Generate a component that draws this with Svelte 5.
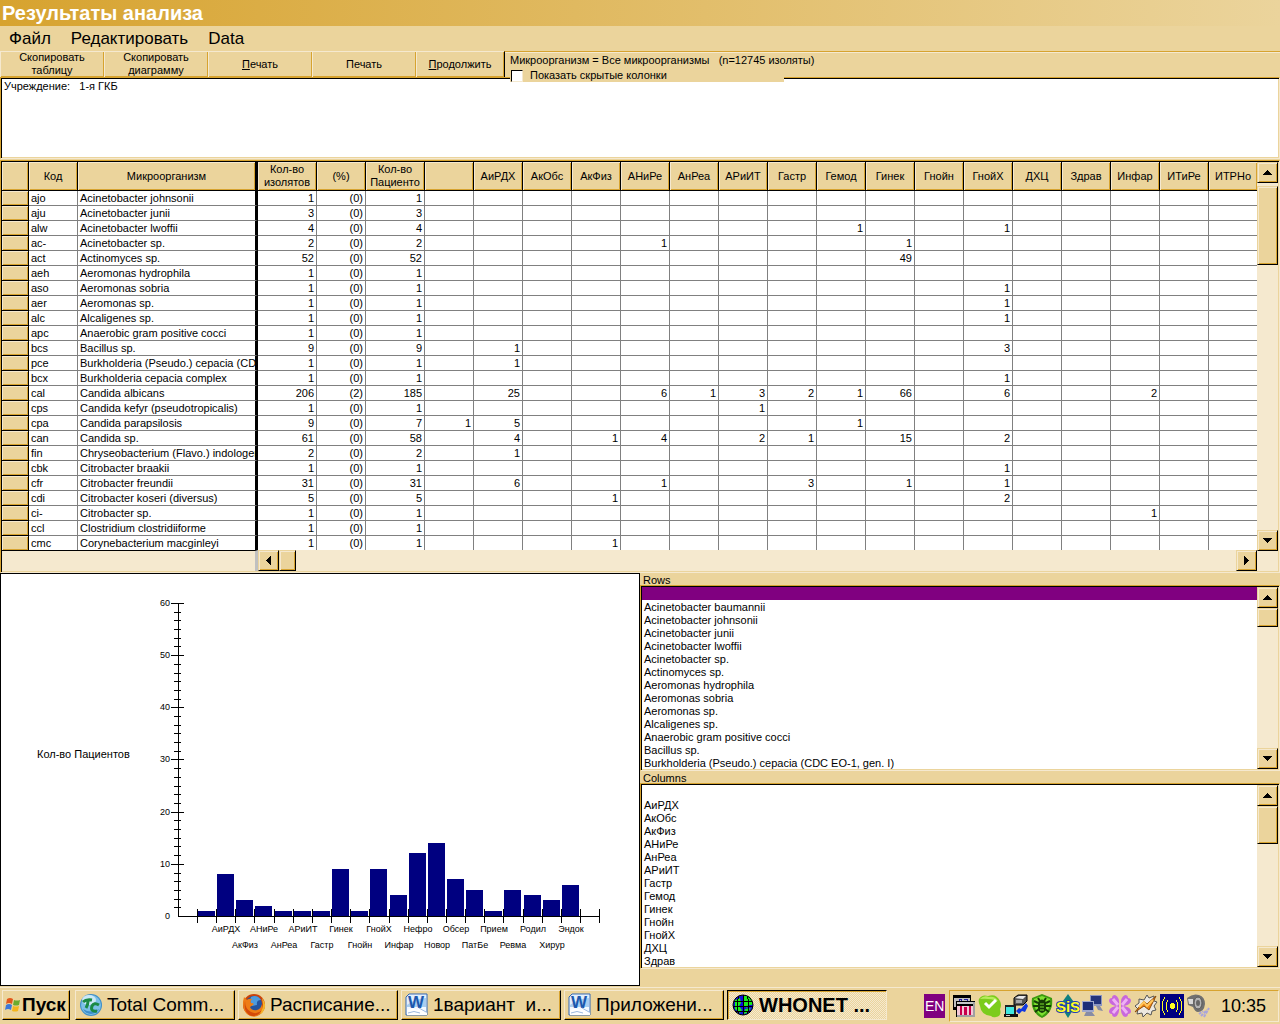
<script>
  const actions = [
    { lines: ['Скопировать', 'таблицу'] },
    { lines: ['Скопировать', 'диаграмму'] },
    { key: 'П', rest: 'ечать' },
    { lines: ['Печать'] },
    { key: 'П', rest: 'родолжить' },
  ];

  const wards = [
    '', 'АиРДХ', 'АкОбс', 'АкФиз', 'АНиРе', 'АнРеа', 'АРиИТ', 'Гастр', 'Гемод', 'Гинек',
    'Гнойн', 'ГнойХ', 'ДХЦ', 'Здрав', 'Инфар', 'ИТиРе', 'ИТРНо',
  ];

  // code, organism, isolates, percent, patients, { ward: count }
  const organisms = [
    ['ajo', 'Acinetobacter johnsonii', 1, 0, 1, {}],
    ['aju', 'Acinetobacter junii', 3, 0, 3, {}],
    ['alw', 'Acinetobacter lwoffii', 4, 0, 4, { Гемод: 1, ГнойХ: 1 }],
    ['ac-', 'Acinetobacter sp.', 2, 0, 2, { АНиРе: 1, Гинек: 1 }],
    ['act', 'Actinomyces sp.', 52, 0, 52, { Гинек: 49 }],
    ['aeh', 'Aeromonas hydrophila', 1, 0, 1, {}],
    ['aso', 'Aeromonas sobria', 1, 0, 1, { ГнойХ: 1 }],
    ['aer', 'Aeromonas sp.', 1, 0, 1, { ГнойХ: 1 }],
    ['alc', 'Alcaligenes sp.', 1, 0, 1, { ГнойХ: 1 }],
    ['apc', 'Anaerobic gram positive cocci', 1, 0, 1, {}],
    ['bcs', 'Bacillus sp.', 9, 0, 9, { АиРДХ: 1, ГнойХ: 3 }],
    ['pce', 'Burkholderia (Pseudo.) cepacia (CDC', 1, 0, 1, { АиРДХ: 1 }],
    ['bcx', 'Burkholderia cepacia complex', 1, 0, 1, { ГнойХ: 1 }],
    ['cal', 'Candida albicans', 206, 2, 185, { АиРДХ: 25, АНиРе: 6, АнРеа: 1, АРиИТ: 3, Гастр: 2, Гемод: 1, Гинек: 66, ГнойХ: 6, Инфар: 2 }],
    ['cps', 'Candida kefyr (pseudotropicalis)', 1, 0, 1, { АРиИТ: 1 }],
    ['cpa', 'Candida parapsilosis', 9, 0, 7, { '': 1, АиРДХ: 5, Гемод: 1 }],
    ['can', 'Candida sp.', 61, 0, 58, { АиРДХ: 4, АкФиз: 1, АНиРе: 4, АРиИТ: 2, Гастр: 1, Гинек: 15, ГнойХ: 2 }],
    ['fin', 'Chryseobacterium (Flavo.) indologene', 2, 0, 2, { АиРДХ: 1 }],
    ['cbk', 'Citrobacter braakii', 1, 0, 1, { ГнойХ: 1 }],
    ['cfr', 'Citrobacter freundii', 31, 0, 31, { АиРДХ: 6, АНиРе: 1, Гастр: 3, Гинек: 1, ГнойХ: 1 }],
    ['cdi', 'Citrobacter koseri (diversus)', 5, 0, 5, { АкФиз: 1, ГнойХ: 2 }],
    ['ci-', 'Citrobacter sp.', 1, 0, 1, { Инфар: 1 }],
    ['ccl', 'Clostridium clostridiiforme', 1, 0, 1, {}],
    ['cmc', 'Corynebacterium macginleyi', 1, 0, 1, { АкФиз: 1 }],
  ];

  const rowItems = [
    '', 'Acinetobacter baumannii', 'Acinetobacter johnsonii', 'Acinetobacter junii',
    'Acinetobacter lwoffii', 'Acinetobacter sp.', 'Actinomyces sp.', 'Aeromonas hydrophila',
    'Aeromonas sobria', 'Aeromonas sp.', 'Alcaligenes sp.', 'Anaerobic gram positive cocci',
    'Bacillus sp.', 'Burkholderia (Pseudo.) cepacia (CDC EO-1, gen. I)',
  ];
  const columnItems = wards.slice(0, 14);

  const bars = [
    ['', 1], ['АиРДХ', 8], ['АкФиз', 3], ['АНиРе', 2], ['АнРеа', 1], ['АРиИТ', 1], ['Гастр', 1],
    ['Гинек', 9], ['Гнойн', 1], ['ГнойХ', 9], ['Инфар', 4], ['Нефро', 12], ['Новор', 14],
    ['Обсер', 7], ['ПатБе', 5], ['Прием', 1], ['Ревма', 5], ['Родил', 4], ['Хирур', 3], ['Эндок', 6],
  ];

  // chart geometry
  const baseY = 342;
  const axisX = 177;
  const yAt = (v) => Math.round(baseY - v * 5.217);
  const xAt = (i) => Math.round(axisX + 19 + i * 19.15);
  const majors = [0, 10, 20, 30, 40, 50, 60];
  const minors = Array.from({ length: 36 }, (_, i) => (i * 10) / 6).filter((_, i) => i % 6 !== 0);
  const xTicks = Array.from({ length: 22 }, (_, i) => i);

  const tasks = [
    { icon: 'commander', title: 'Total Comm...' },
    { icon: 'firefox', title: 'Расписание...' },
    { icon: 'word', title: '1вариант  и...' },
    { icon: 'word', title: 'Приложени...' },
    { icon: 'globe', title: 'WHONET ...', active: true },
  ];

  let rowSelection = $state(rowItems[0]);
  let showHidden = $state(false);
</script>

{#snippet arrow(dir)}
  <svg class="arrow" width="9" height="9" viewBox="0 0 9 9" aria-hidden="true">
    {#if dir === 'up'}
      <path d="M4 2h1v1h1v1h1v1h1v1h1v1H0V6h1V5h1V4h1V3h1z" />
    {:else if dir === 'down'}
      <path d="M0 2h9v1H8v1H7v1H6v1H5v1H4V6H3V5H2V4H1V3H0z" />
    {:else if dir === 'left'}
      <path d="M2 4h1V3h1V2h1V1h1V0h1v9H6V8H5V7H4V6H3V5H2z" />
    {:else}
      <path d="M2 0h1v1h1v1h1v1h1v1h1v1H6v1H5v1H4v1H3v1H2z" />
    {/if}
  </svg>
{/snippet}

{#snippet vscroll(size)}
  <div class="vscroll">
    <button type="button" class="scroll-btn" aria-label="Scroll up">{@render arrow('up')}</button>
    <div class="thumb {size}"></div>
    <button type="button" class="scroll-btn end" aria-label="Scroll down">{@render arrow('down')}</button>
  </div>
{/snippet}

{#snippet taskIcon(name)}
  <svg class="task-icon" width="24" height="24" viewBox="0 0 24 24" aria-hidden="true">
    {#if name === 'commander'}
      <circle cx="12" cy="12" r="11" fill="#3f8fc8" />
      <circle cx="12" cy="12" r="10" fill="#7cc0e6" />
      <ellipse cx="10" cy="7" rx="7" ry="5" fill="#cbe8f7" />
      <path d="M4 16a9 9 0 0 0 16 0q-8 5-16 0z" fill="#3d8ecb" />
      <path d="M4 9q3-3 9-2M9 8q0 4-2 7" stroke="#1b8a45" stroke-width="3" fill="none" />
      <path d="M20 12q-5-3-7 1q-2 6 5 5" stroke="#1b8a45" stroke-width="3" fill="none" />
    {:else if name === 'firefox'}
      <circle cx="12" cy="12" r="11" fill="#c9430d" />
      <circle cx="12" cy="11" r="8" fill="#26549d" />
      <path d="M9 4q6-3 10 3q-5 0-4 5l-5 1q-3-4-1-9z" fill="#4f9bdc" />
      <path d="M2 4l3 3q2-2 5-1q-2 2-1 4q4 0 2 2l-3 2q2 4 7 3q4-1 5-6q2 7-3 11q-6 4-12-1Q-1 15 2 4z" fill="#ee7c14" />
      <path d="M3 8q0 8 6 11q6 3 11-2q-3 6-10 6Q1 21 3 8z" fill="#d34a0a" />
      <path d="M20 5q5 6 2 12q-1 3-4 4q3-6 3-9z" fill="#f6b428" />
    {:else if name === 'word'}
      <path d="M4 1h18v21H1V4z" fill="#f4f9ff" stroke="#2f66b4" />
      <path d="M4 2h17v12H2V4z" fill="#a9cdf0" />
      <path d="M4 2h17v3Q9 6 2 12V4z" fill="#e2effc" />
      <text class="word-mark" x="11" y="15">W</text>
      <path d="M2 17q6-3 10 0l4-2 6 5v2H2z" fill="#fff" />
      <path d="M3 20q6-3 12 0M14 15l7 4" stroke="#9bb8de" fill="none" />
    {:else}
      <circle cx="12" cy="12" r="10" fill="#1010e0" />
      <path d="M13 3h5l3 5v4h-4l-1 3-3-2-1-4zM4 7l5-2 1 5-2 3 3 4-2 3-5-4zM14 16l6-1-4 5-3 1z" fill="#18f018" />
      <g fill="none" stroke="#000" shape-rendering="crispEdges">
        <path d="M3 8h18M2 13h20M4 18h16M12 2v20" />
        <path d="M8 3Q4 12 8 21M16 3q4 9 0 18" />
      </g>
      <circle cx="12" cy="12" r="10" fill="none" stroke="#000" />
    {/if}
  </svg>
{/snippet}

<div class="window">
  <header class="title">Результаты анализа</header>

  <nav class="menu">
    <button type="button">Файл</button>
    <button type="button">Редактировать</button>
    <button type="button">Data</button>
  </nav>

  <div class="toolbar">
    {#each actions as a}
      <button type="button" class="action">
        {#if a.key}
          <span><u>{a.key}</u>{a.rest}</span>
        {:else}
          {#each a.lines as line}<span>{line}</span>{/each}
        {/if}
      </button>
    {/each}
    <div class="summary">
      <div class="caption">Микроорганизм = Все микроорганизмы &nbsp; (n=12745 изоляты)</div>
      <label class="hidden-cols">
        <input type="checkbox" bind:checked={showHidden} />
        Показать скрытые колонки
      </label>
    </div>
  </div>

  <textarea class="sunken filters" readonly aria-label="Фильтр">Учреждение:   1-я ГКБ</textarea>

  <section class="sunken grid">
    <div class="grid-main">
      <div class="grid-view">
        <table>
          <colgroup>
            <col class="w-head" /><col class="w-std" /><col class="w-name" /><col class="w-wide" />
            <col class="w-std" /><col class="w-wide" />
            {#each wards as _}<col class="w-std" />{/each}
          </colgroup>
          <thead>
            <tr>
              <th></th>
              <th>Код</th>
              <th class="frozen">Микроорганизм</th>
              <th>Кол-во<br />изолятов</th>
              <th>(%)</th>
              <th>Кол-во<br />Пациенто</th>
              {#each wards as w}<th>{w}</th>{/each}
            </tr>
          </thead>
          <tbody>
            {#each organisms as [code, name, isolates, pct, patients, counts]}
              <tr>
                <th></th>
                <td class="text">{code}</td>
                <td class="text frozen">{name}</td>
                <td>{isolates}</td>
                <td>({pct})</td>
                <td>{patients}</td>
                {#each wards as w}<td>{counts[w] ?? ''}</td>{/each}
              </tr>
            {/each}
          </tbody>
        </table>
      </div>
      <div class="hscroll">
        <div class="frozen-foot"></div>
        <button type="button" class="scroll-btn" aria-label="Scroll left">{@render arrow('left')}</button>
        <div class="thumb wide"></div>
        <button type="button" class="scroll-btn end" aria-label="Scroll right">{@render arrow('right')}</button>
      </div>
    </div>
    <div class="grid-side">
      {@render vscroll('tall')}
      <div class="corner"></div>
    </div>
  </section>

  <div class="lower">
    <div class="chart">
      <svg viewBox="0 0 638 411" role="img" aria-label="Кол-во Пациентов">
        <text class="axis-title" x="36" y="184">Кол-во Пациентов</text>
        {#each bars as [label, value], i}
          <rect x={xAt(i) + 1} y={yAt(value)} width="17" height={baseY - yAt(value)} fill="#000080" />
          {#if label}
            <text class="bar-label" x={xAt(i) + 10} y={i % 2 ? 358 : 374}>{label}</text>
          {/if}
        {/each}
        <g fill="#000" shape-rendering="crispEdges">
          <rect x={axisX} y={yAt(60)} width="1" height={baseY - yAt(60)} />
          <rect x={axisX} y={baseY} width={xAt(21) - axisX + 1} height="1" />
          {#each majors.slice(1) as v}<rect x={axisX - 7} y={yAt(v)} width="13" height="1" />{/each}
          {#each minors as v}<rect x={axisX - 4} y={yAt(v)} width="7" height="1" />{/each}
          {#each xTicks as i}<rect x={xAt(i)} y={baseY - 7} width="1" height="14" />{/each}
        </g>
        {#each majors as v}<text class="y-label" x={axisX - 8} y={yAt(v) + 3}>{v}</text>{/each}
      </svg>
    </div>

    <div class="lists">
      <label for="rows">Rows</label>
      <div class="sunken list">
        <select id="rows" size="14" bind:value={rowSelection}>
          {#each rowItems as item}<option value={item}>{item}</option>{/each}
        </select>
        {@render vscroll('small')}
      </div>
      <label for="columns">Columns</label>
      <div class="sunken list">
        <select id="columns" size="14">
          {#each columnItems as item}<option value={item}>{item}</option>{/each}
        </select>
        {@render vscroll('medium')}
      </div>
    </div>
  </div>

  <footer class="taskbar">
    <button type="button" class="task start">
      <svg width="17" height="18" viewBox="0 0 17 18" aria-hidden="true">
        <path d="M3 3q3-2 6 0L8 8Q5 6 2 8z" fill="#e2571c" />
        <path d="M10 4q3 1 6 0l-1 5q-3 1-6 0z" fill="#6cab2e" />
        <path d="M2 9q3-2 6 0l-1 5Q4 12 1 14z" fill="#3c78d8" />
        <path d="M9 10q3 1 6 0l-1 5q-3 1-6 0z" fill="#f4b51c" />
      </svg>
      <span>Пуск</span>
    </button>
    <div class="tasks">
      {#each tasks as t}
        <button type="button" class="task" class:active={t.active}>
          {@render taskIcon(t.icon)}<span>{t.title}</span>
        </button>
      {/each}
    </div>
    <span class="lang">EN</span>
    <div class="tray">
      <!-- statistics windows -->
      <svg viewBox="0 0 24 24" aria-hidden="true" shape-rendering="crispEdges">
        <path d="M1 1h18v15H1z" fill="#000" />
        <path d="M2 4h16v9H2z" fill="#c0c0c0" />
        <path d="M5 7h2V5h2v2h2M12 5h3v3" stroke="#2020a0" fill="none" />
        <path d="M4 7h19v16H4z" fill="#000" />
        <path d="M5 8h16v2H5z" fill="#c8c8c8" />
        <path d="M5 12h16v9H5z" fill="#f4c8d8" />
        <path d="M8 12h2v9H8zM12 13h3v8h-3zM17 12h2v9h-2z" fill="#c8004c" />
        <path d="M21 8h2v15H5v-2h16z" fill="#a0a0a0" />
      </svg>
      <!-- green check -->
      <svg viewBox="0 0 24 24" aria-hidden="true">
        <path d="M1 5q3-5 9-3q8-3 12 5q2 4 0 8q2 7-4 8q-3 1-5-1Q3 21 2 12q-2-4-1-7z" fill="#7ccc1c" />
        <path d="M2 5q4-4 9-2q6-1 9 4q-9-3-18-2z" fill="#b6ec5c" />
        <path d="M7 9l4 4 7-7" stroke="#fff" stroke-width="3" fill="none" />
      </svg>
      <!-- device -->
      <svg viewBox="0 0 24 24" aria-hidden="true">
        <path d="M10 4l4-3h9v6l-4 4h-9z" fill="#555" stroke="#000" />
        <path d="M11 4l4-2h7l-3 3z" fill="#e8e8e8" />
        <path d="M12 6h6v3h-6z" fill="#a8a8a8" />
        <path d="M1 11h11v9H1z" fill="#222" />
        <path d="M2 13h8v7H2z" fill="#40e8e0" />
        <path d="M0 20h14v3H0z" fill="#111" />
        <path d="M2 21h4v1H2z" fill="#ccc" />
        <path d="M12 17l3-3 2 1 5-6 2 3-3 6-3-1-3 3z" fill="#1038e0" />
      </svg>
      <!-- shield -->
      <svg viewBox="0 0 24 24" aria-hidden="true">
        <path d="M12 0l10 4q2 14-10 20Q0 18 2 4z" fill="#3c9a10" />
        <path d="M12 2l8 3q1 11-8 17Q3 16 4 5z" fill="#7ee030" />
        <path d="M8 8q4-5 8 0v8q-4 6-8 0z" fill="#153c05" />
        <path d="M4 7l4 2M20 7l-4 2M3 12h18M5 18l4-3M19 18l-4-3M8 4l2 3M16 4l-2 3" stroke="#153c05" stroke-width="2" />
        <path d="M10 10h4M10 13h4M10 16h4" stroke="#7ee030" />
      </svg>
      <!-- SiS -->
      <svg viewBox="0 0 24 24" aria-hidden="true">
        <path d="M12 0l8 11-8 13-8-13z" fill="#108080" />
        <text class="sis-mark" x="12" y="18">SiS</text>
      </svg>
      <!-- network -->
      <svg viewBox="0 0 24 24" aria-hidden="true">
        <path d="M8 1h12v11H8z" fill="#8c95c0" />
        <path d="M9 2h10v8H9z" fill="#24347c" />
        <path d="M0 7h12v11H0z" fill="#a0a8cc" />
        <path d="M1 8h10v8H1z" fill="#1d2e78" />
        <path d="M4 18h6l3 4H2zM14 12h4l3 5-5-1z" fill="#888ca4" />
      </svg>
      <!-- flower -->
      <svg viewBox="0 0 24 24" aria-hidden="true">
        <path d="M11 12Q2 12 1 7Q1 4 4 4Q4 1 7 1q5 2 4 11zM13 12q9 0 10-5q0-3-3-3q0-3-3-3q-5 2-4 11zM11 12q-9 0-10 5q0 3 3 3q0 3 3 3q5-2 4-11zM13 12q9 0 10 5q0 3-3 3q0 3-3 3q-5-2-4-11z" fill="#c868dc" />
        <path d="M5 5l5 6M19 5l-5 6M5 19l5-6M19 19l-5-6" stroke="#eeb0f4" stroke-width="3" />
      </svg>
      <!-- player -->
      <svg viewBox="0 0 24 24" aria-hidden="true">
        <path d="M13 1l2 3 5-2v5l3 1-3 4 2 4-4 1-1 4-4-2-4 4-1-4-5 1 1-5-3-3 4-3V5l5 1z" fill="#ece8e0" stroke="#555" />
        <path d="M1 18L10 7l3 3 9-8-7 14-5-4z" fill="#f08818" stroke="#8c4c0c" />
        <path d="M5 13l5-5 3 4 6-6" stroke="#ffc860" stroke-width="2" fill="none" />
      </svg>
      <!-- wireless -->
      <svg viewBox="0 0 24 24" aria-hidden="true" shape-rendering="crispEdges">
        <path d="M0 0h24v24H0z" fill="#000080" />
        <path d="M11 9h3v1h1v4h-1v1h-3v-1h-1v-4h1z" fill="#ffff20" />
        <path d="M8 6q-4 6 0 12M16 6q4 6 0 12M5 3q-6 9 0 18M19 3q6 9 0 18" stroke="#ffff20" fill="none" />
      </svg>
      <!-- volume -->
      <svg viewBox="0 0 24 24" aria-hidden="true">
        <path d="M1 4q6-5 12-3q6 2 6 9q-1 8-7 8Q9 18 7 13L2 11z" fill="#707070" />
        <ellipse cx="12" cy="9" rx="4" ry="6" fill="#b4b4b4" stroke="#555" />
        <ellipse cx="12" cy="9" rx="2" ry="3" fill="#666" />
        <path d="M2 5h5v5H3z" fill="#d8d8d8" />
        <path d="M13 20l4-3M15 22l6-6M18 23l5-9" stroke="#a8a4dc" stroke-width="2" stroke-dasharray="3 1" />
      </svg>
      <time>10:35</time>
    </div>
  </footer>
</div>

<style>
  :global(body) {
    margin: 0;
    background: #ebd49c;
  }

  .window {
    --face: #ebd49c;
    --light: #f5e9cf;
    --shade: #d7a32f;
    font: 11px/13px 'Liberation Sans', Arial, sans-serif;
    color: #000;
    background: var(--face);
    overflow: hidden;
  }

  button {
    font: inherit;
    color: inherit;
    margin: 0;
    padding: 0;
    border: 0;
    border-radius: 0;
    background: var(--face);
  }

  .title {
    height: 26px;
    padding-left: 2px;
    font: bold 20px/26px 'Liberation Sans', Arial, sans-serif;
    color: #fff;
    background: linear-gradient(to right, #d7a32f, #ebd49c);
  }

  .menu {
    display: flex;
    gap: 20px;
    height: 25px;
    padding-left: 9px;
  }

  .menu button {
    font-size: 17px;
    line-height: 22px;
  }

  .toolbar {
    display: flex;
    height: 26px;
    position: relative;
    z-index: 1;
  }

  .action {
    width: 104px;
    display: flex;
    flex-direction: column;
    align-items: center;
    justify-content: center;
    box-shadow: inset 1px 1px var(--light), inset -1px -1px var(--shade);
  }

  .action:nth-child(5) {
    width: 88px;
  }

  .summary {
    flex: 1;
    border-left: 1px solid #000;
    border-top: 1px solid var(--shade);
    box-shadow: inset 0 1px var(--light);
    padding-left: 5px;
  }

  .caption {
    padding: 1px 0 2px;
    line-height: 14px;
  }

  .hidden-cols {
    display: flex;
    align-items: center;
    gap: 7px;
    width: 274px;
    height: 13px;
    background: var(--face);
  }

  .hidden-cols input {
    appearance: none;
    width: 12px;
    height: 12px;
    margin: 0 0 0 1px;
    background: #fff;
    border: 1px solid;
    border-color: #000 var(--light) var(--light) #000;
  }

  .hidden-cols input:checked {
    background: #000;
    box-shadow: inset 0 0 0 2px #fff;
  }

  /* Two-tone sunken frame shared by the text box, the grid and the lists */
  .sunken {
    box-sizing: border-box;
    border: 1px solid;
    border-color: var(--shade) var(--light) var(--light) var(--shade);
    padding: 1px;
    background:
      linear-gradient(#000, #000) top / 100% 1px no-repeat,
      linear-gradient(#000, #000) left / 1px 100% no-repeat,
      linear-gradient(var(--face), var(--face)) bottom / 100% 1px no-repeat,
      linear-gradient(var(--face), var(--face)) right / 1px 100% no-repeat,
      #fff;
  }

  .filters {
    display: block;
    width: 100%;
    height: 82px;
    margin: 0 0 1px;
    padding: 2px 3px;
    font: inherit;
    resize: none;
    border-radius: 0;
    outline: 0;
  }

  .grid {
    display: flex;
  }

  .grid-main {
    flex: 1;
    min-width: 0;
  }

  .grid-view {
    overflow: hidden;
  }

  .grid-side {
    display: flex;
    flex-direction: column;
    width: 21px;
  }

  .corner {
    height: 20px;
    background: var(--light);
  }

  table {
    table-layout: fixed;
    width: 0;
    border-collapse: separate;
    border-spacing: 0;
  }

  .w-head { width: 27px; }
  .w-std { width: 49px; }
  .w-wide { width: 59px; }
  .w-name { width: 180px; }

  th,
  td {
    box-sizing: border-box;
    padding: 0;
    font-weight: normal;
    white-space: nowrap;
    overflow: hidden;
  }

  th {
    background: var(--face);
    border-right: 1px solid #000;
    border-bottom: 1px solid #000;
    box-shadow: inset 1px 1px var(--light), inset -1px -1px var(--shade);
  }

  thead th {
    height: 29px;
  }

  td {
    height: 15px;
    padding-right: 2px;
    line-height: 14px;
    text-align: right;
    background: #fff;
    border-right: 1px solid #808080;
    border-bottom: 1px solid #808080;
  }

  td.text {
    padding: 0 0 0 2px;
    text-align: left;
  }

  th.frozen,
  td.frozen {
    border-right: 3px solid #000;
  }

  tbody tr:last-child > * {
    height: 14px;
    border-bottom: 0;
  }

  .hscroll {
    display: flex;
    height: 21px;
    background: var(--light);
  }

  .frozen-foot {
    box-sizing: border-box;
    width: 256px;
    border-top: 1px solid #000;
    border-right: 3px solid #c0c0c0;
  }

  .vscroll {
    flex: 1;
    display: flex;
    flex-direction: column;
    background: var(--light);
  }

  .scroll-btn,
  .thumb {
    box-sizing: border-box;
    width: 21px;
    height: 21px;
    background: var(--face);
    border: 1px solid;
    border-color: var(--face) #000 #000 var(--face);
    box-shadow: inset 1px 1px var(--light), inset -1px -1px var(--shade);
  }

  .scroll-btn {
    display: flex;
    align-items: center;
    justify-content: center;
  }

  .vscroll .end {
    margin-top: auto;
  }

  .hscroll .end {
    margin-left: auto;
  }

  .thumb.wide { width: 17px; }
  .thumb.small { height: 19px; }
  .thumb.medium { height: 38px; }
  .thumb.tall {
    height: 79px;
    margin-top: 3px;
  }

  .arrow {
    display: block;
    shape-rendering: crispEdges;
  }

  .lower {
    display: flex;
    align-items: flex-start;
  }

  .chart {
    box-sizing: border-box;
    width: 50%;
    border: 1px solid #000;
    background: #fff;
  }

  .chart svg {
    display: block;
    width: 100%;
  }

  .bar-label,
  .y-label {
    font-size: 9px;
    text-anchor: middle;
  }

  .y-label {
    text-anchor: end;
  }

  .lists {
    width: 50%;
  }

  .lists label {
    display: block;
    padding-left: 3px;
    height: 12px;
    line-height: 14px;
  }

  .list {
    display: flex;
    height: 186px;
  }

  .list .vscroll {
    flex: none;
    width: 21px;
  }

  select {
    flex: 1;
    min-width: 0;
    height: 182px;
    margin: 0;
    padding: 0;
    border: 0;
    border-radius: 0;
    outline: 0;
    font: inherit;
    color: #000;
    background: #fff;
    overflow: hidden;
    scrollbar-width: none;
  }

  option {
    box-sizing: border-box;
    height: 13px;
    min-height: 13px;
    padding: 1px 2px 0;
    line-height: 13px;
  }

  option:checked {
    color: #fff;
    background: linear-gradient(#800080, #800080);
  }

  .taskbar {
    display: flex;
    align-items: flex-start;
    box-sizing: border-box;
    height: 38px;
    padding: 4px 1px 0 2px;
    background: linear-gradient(var(--light), var(--light)) 0 1px / 100% 1px no-repeat;
  }

  .task {
    box-sizing: border-box;
    display: flex;
    align-items: center;
    gap: 4px;
    flex: 0 1 160px;
    min-width: 0;
    height: 30px;
    padding: 0 3px;
    font-size: 19px;
    line-height: 24px;
    white-space: pre;
    border: 1px solid;
    border-color: var(--light) #000 #000 var(--light);
    box-shadow: inset -1px -1px var(--shade);
  }

  .task svg {
    flex: none;
  }

  .start {
    flex: none;
    width: 68px;
    gap: 1px;
    padding: 0 1px;
    font-weight: bold;
  }

  .tasks {
    flex: 1;
    min-width: 0;
    display: flex;
    gap: 3px;
    margin-left: 5px;
  }

  .active {
    font-size: 20px;
    font-weight: bold;
    border-color: #000 var(--light) var(--light) #000;
    box-shadow: inset 1px 1px var(--shade);
    background: repeating-conic-gradient(var(--light) 0 25%, var(--face) 0 50%) 0 0 / 2px 2px;
  }

  .word-mark {
    font-size: 17px;
    font-weight: bold;
    text-anchor: middle;
    fill: #1c58ad;
  }

  .sis-mark {
    font-size: 15px;
    font-weight: bold;
    text-anchor: middle;
    fill: #ffff20;
    stroke: #2440b0;
    stroke-width: 2px;
    paint-order: stroke;
  }

  .lang {
    width: 20px;
    height: 24px;
    margin: 4px 4px 0 0;
    padding-left: 1px;
    font-size: 14px;
    line-height: 24px;
    color: #fff;
    background: #800080;
  }

  .tray {
    box-sizing: border-box;
    display: flex;
    align-items: center;
    gap: 2px;
    height: 32px;
    padding: 0 12px 0 2px;
    border: 1px solid;
    border-color: var(--shade) var(--light) var(--light) var(--shade);
  }

  .tray svg {
    width: 24px;
    height: 24px;
  }

  time {
    margin-left: 9px;
    font-size: 18px;
    line-height: 24px;
  }
</style>
